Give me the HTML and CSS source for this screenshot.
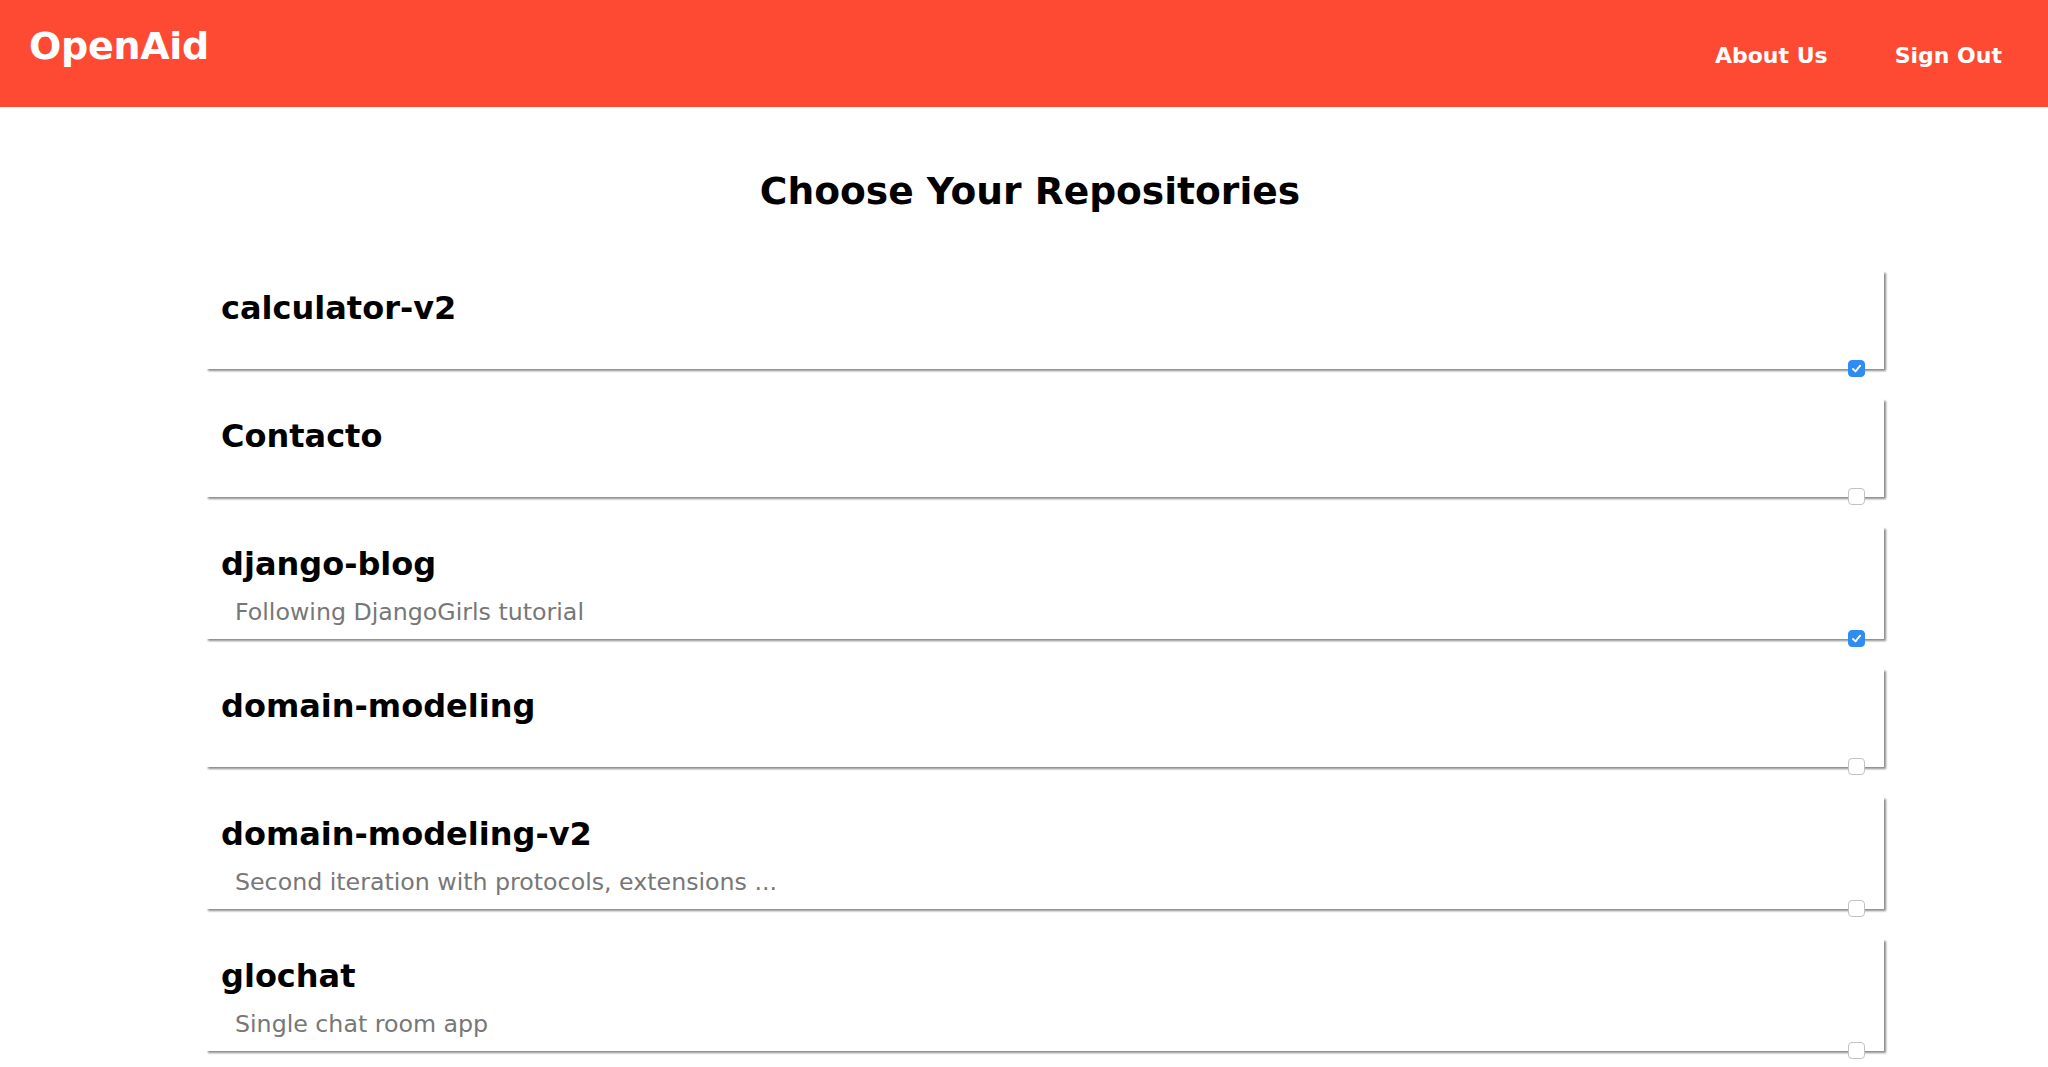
FILE: index.html
```html
<!DOCTYPE html>
<html lang="en">
<head>
<meta charset="utf-8">
<title>OpenAid - Choose Your Repositories</title>
<link rel="stylesheet" href="styles.css">
</head>
<body>
<header class="topbar">
  <a class="logo" href="#">OpenAid</a>
  <nav class="nav">
    <a class="nav-link" href="#">About Us</a>
    <a class="nav-link" href="#">Sign Out</a>
  </nav>
</header>
<main class="page">
  <h1 class="page-title">Choose Your Repositories</h1>
  <ul class="repo-list">
    <li class="repo-card">
      <h2 class="repo-name">calculator-v2</h2>
      <span class="check checked"><svg viewBox="0 0 16 16"><path d="M4.2 8.4 L6.9 11.1 L11.9 5" /></svg></span>
    </li>
    <li class="repo-card">
      <h2 class="repo-name">Contacto</h2>
      <span class="check"></span>
    </li>
    <li class="repo-card">
      <h2 class="repo-name">django-blog</h2>
      <p class="repo-desc">Following DjangoGirls tutorial</p>
      <span class="check checked"><svg viewBox="0 0 16 16"><path d="M4.2 8.4 L6.9 11.1 L11.9 5" /></svg></span>
    </li>
    <li class="repo-card">
      <h2 class="repo-name">domain-modeling</h2>
      <span class="check"></span>
    </li>
    <li class="repo-card">
      <h2 class="repo-name">domain-modeling-v2</h2>
      <p class="repo-desc">Second iteration with protocols, extensions ...</p>
      <span class="check"></span>
    </li>
    <li class="repo-card">
      <h2 class="repo-name">glochat</h2>
      <p class="repo-desc">Single chat room app</p>
      <span class="check"></span>
    </li>
  </ul>
</main>
</body>
</html>
```

FILE: styles.css
```css
html, body {
  margin: 0;
  padding: 0;
  background: #ffffff;
  font-family: "DejaVu Sans", Verdana, sans-serif;
  color: #000;
}

.topbar {
  height: 107px;
  background: #ff4a33;
  display: flex;
  justify-content: space-between;
  align-items: flex-start;
  box-sizing: border-box;
}

.logo {
  color: #fff;
  text-decoration: none;
  font-weight: bold;
  font-size: 38px;
  line-height: 38px;
  padding: 27px 0 0 29px;
  letter-spacing: -0.3px;
}

.nav {
  display: flex;
  gap: 67px;
  padding: 45px 46px 0 0;
}

.nav-link {
  color: #fff;
  text-decoration: none;
  font-weight: bold;
  font-size: 22px;
  line-height: 22px;
}

.page {
  padding: 0 0 40px 0;
}

.page-title {
  margin: 66px 0 0 0;
  padding-left: 12px;
  text-align: center;
  font-size: 37.6px;
  line-height: 37px;
  font-weight: bold;
}

.repo-list {
  list-style: none;
  margin: 61px 164px 0 206px;
  padding: 0;
  display: flex;
  flex-direction: column;
  gap: 30px;
}

.repo-card {
  position: relative;
  min-height: 98px;
  box-sizing: border-box;
  padding: 15px 14px 13px 15px;
  background: #fff;
  box-shadow: 2px 2px 2px #8c8c8c;
}

.repo-name {
  margin: 0;
  font-size: 32px;
  line-height: 44px;
  font-weight: bold;
  color: #000;
}

.repo-desc {
  margin: 12px 0 0 14px;
  font-size: 23.7px;
  line-height: 28px;
  color: #777;
}

.check {
  position: absolute;
  right: 19px;
  bottom: -8px;
  width: 17px;
  height: 17px;
  box-sizing: border-box;
  border-radius: 4px;
  background: #fff;
  border: 1px solid #c2c2c2;
  display: flex;
  align-items: center;
  justify-content: center;
}

.check.checked {
  background: #2f8cf2;
  border-color: #2f8cf2;
}

.check svg {
  width: 15px;
  height: 15px;
  fill: none;
  stroke: #fff;
  stroke-width: 2;
  stroke-linecap: round;
  stroke-linejoin: round;
}
```
